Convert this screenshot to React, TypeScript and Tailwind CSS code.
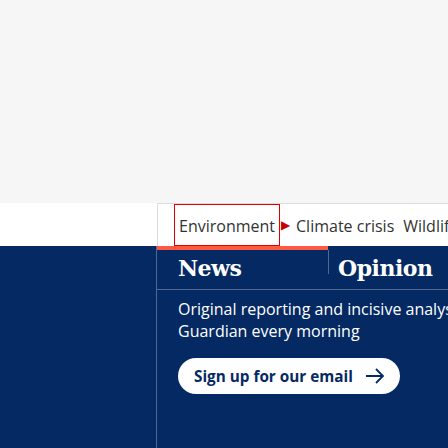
export default function App() {
  const topics = ["Climate crisis", "Wildlife", "Energy"];

  return (
    <div className="w-[448px] h-[448px] overflow-hidden bg-[#f6f6f6] flex flex-col font-['Open_Sans',sans-serif]">
      <div className="h-[203px] shrink-0" />

      {/* Sub nav */}
      <div className="flex h-[43px] shrink-0 bg-white">
        <div className="w-[157px] shrink-0" />
        <div className="flex flex-1 items-stretch border-l border-t border-[#dcdcdc] pl-[16px] text-[16px] text-[#333] whitespace-nowrap">
          <a className="flex items-center border border-[#e00000] px-[4px] pt-[1px]">
            Environment
          </a>
          <span className="flex items-center pl-[1px] pr-[6px] text-[12px] text-[#c70000]">
            ▶
          </span>
          {topics.map((t) => (
            <a key={t} className="flex items-center pr-[9px] pt-[1px]">
              {t}
            </a>
          ))}
        </div>
      </div>

      {/* Newsletter panel */}
      <div className="flex flex-1 bg-[#052962] text-white">
        <div className="w-[157px] shrink-0 border-r border-[#506991]" />
        <div className="flex flex-col w-[600px] shrink-0">
          <div className="flex h-[44px] border-b border-[#506991]">
            <div className="w-[171px] border-t-4 border-[#ff5943] pl-[21px] pt-[4px]">
              <span className="font-['DejaVu_Serif',serif] font-bold text-[22px] leading-[28px] tracking-[-0.5px]">
                News
              </span>
            </div>
            <div className="flex items-start pt-[4px]">
              <div className="w-px h-[24px] bg-[#506991]" />
              <span className="pl-[9px] pt-[4px] font-['DejaVu_Serif',serif] font-bold text-[22px] leading-[28px] tracking-[-0.5px]">
                Opinion
              </span>
            </div>
          </div>
          <p className="pl-[21px] pt-[8px] text-[16px] leading-[22px]">
            Original reporting and incisive analysis, direct from the
            <br />
            Guardian every morning
          </p>
          <div className="pl-[21px] pt-[16px]">
            <button className="flex items-center h-[36px] w-[222px] rounded-full bg-white pl-[16px] text-[#052962] font-bold text-[15.3px]">
              Sign up for our email
              <svg width="20" height="16" viewBox="0 0 20 16" className="ml-[12px]">
                <path d="M1 8h17M11 1l7 7-7 7" fill="none" stroke="#052962" strokeWidth="1.8" />
              </svg>
            </button>
          </div>
        </div>
      </div>
    </div>
  );
}
